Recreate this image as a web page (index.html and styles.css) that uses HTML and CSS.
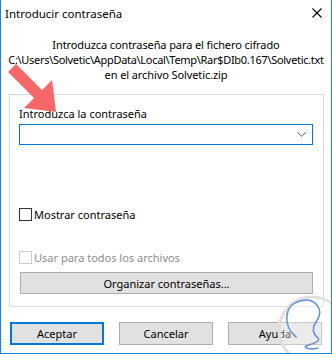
FILE: index.html
```html
<!DOCTYPE html>
<html lang="es">
<head>
<meta charset="utf-8">
<title>Introducir contraseña</title>
<link rel="stylesheet" href="styles.css">
</head>
<body>
<div class="window">
  <div class="titlebar">
    <span class="title">Introducir contraseña</span>
    <svg class="close" width="10" height="10" viewBox="0 0 10 10"><path d="M0.5 0.5 L9.5 9.5 M9.5 0.5 L0.5 9.5" stroke="#000" stroke-width="1.1" fill="none"/></svg>
  </div>
  <div class="message">
    <div>Introduzca contraseña para el fichero cifrado</div>
    <div class="path">C:\Users\Solvetic\AppData\Local\Temp\Rar$DIb0.167\Solvetic.txt</div>
    <div>en el archivo Solvetic.zip</div>
  </div>
  <div class="group">
    <div class="label">Introduzca la contraseña</div>
    <div class="combo">
      <svg class="chev" width="9" height="5" viewBox="0 0 9 5"><path d="M0.5 0.5 L4.5 4.3 L8.5 0.5" stroke="#606060" stroke-width="1" fill="none"/></svg>
    </div>
    <div class="check show"><span class="box"></span><span>Mostrar contraseña</span></div>
    <div class="check disabled"><span class="box"></span><span>Usar para todos los archivos</span></div>
    <div class="btn wide">Organizar contraseñas...</div>
  </div>
  <div class="actions">
    <div class="btn default">Aceptar</div>
    <div class="btn">Cancelar</div>
    <div class="btn">Ayuda</div>
  </div>
  <svg class="arrow" width="70" height="120" viewBox="0 0 70 120"><polygon points="16,64 42,90 52,80 56,112 24,108 34,98 8,72" fill="#f75a5c" fill-opacity="0.92"/></svg>
  <svg class="logo" width="72" height="72" viewBox="260 282 72 72">
    <circle cx="312" cy="330" r="33" fill="rgba(255,255,255,0.35)" stroke="#e0e0e0" stroke-width="3"/>
    <path d="M296 337 C283 327 283 305 300 301 C316 297 325 310 316 322 C312 328 312 333 318 338 C321 342 311 344 306 346 C303 348 311 350 318 348" fill="none" stroke="#6a94d4" stroke-width="1.6" stroke-linecap="round"/>
  </svg>
</div>
</body>
</html>
```
FILE: styles.css
```css
* { box-sizing: border-box; }
html, body { margin: 0; padding: 0; }
body {
  background: #fff;
  font-family: "Noto Sans", "Open Sans", sans-serif;
  font-size: 11px;
  color: #000;
}
.window {
  position: relative;
  width: 332px;
  height: 354px;
  border: 1px solid #1883d7;
  border-top: none;
  background: #fff;
  overflow: hidden;
}
.titlebar {
  height: 30px;
  display: flex;
  align-items: center;
  justify-content: space-between;
  padding: 0 9px 4px 4px;
}
.title { line-height: 15px; font-size: 11.5px; }
.close { display: block; }
.message {
  margin-top: 7px;
  text-align: center;
  line-height: 15px;
  white-space: nowrap;
  letter-spacing: -0.1px;
}
.message .path { letter-spacing: -0.3px; }
.group {
  margin: 12px 0 0 8px;
  width: 315px;
  border: 1px solid #dcdcdc;
  padding: 11px 10px 12px 9px;
}
.label { line-height: 15px; }
.combo {
  margin-top: 3px;
  height: 21px;
  border: 1px solid #0078d7;
  display: flex;
  align-items: center;
  justify-content: flex-end;
  padding-right: 6px;
}
.chev { display: block; }
.check {
  display: flex;
  align-items: center;
  height: 15px;
  line-height: 15px;
}
.check.show { margin-top: 62px; }
.check.disabled { margin-top: 28px; color: #8c8c8c; }
.box {
  width: 13px;
  height: 13px;
  border: 1px solid #333;
  margin-right: 2px;
  flex: none;
}
.disabled .box { border-color: #cccccc; }
.btn {
  height: 22px;
  background: #e1e1e1;
  border: 1px solid #adadad;
  display: flex;
  align-items: center;
  justify-content: center;
  line-height: 15px;
}
.btn.wide { margin: 7px 0 0 1px; }
.actions {
  display: flex;
  gap: 15px;
  margin: 15px 0 0 9px;
}
.actions .btn { width: 94px; height: 23px; }
.btn.default { border: 2px solid #0078d7; }
.arrow { position: absolute; left: -1px; top: 0; pointer-events: none; }
.logo { position: absolute; left: 259px; top: 282px; pointer-events: none; }
```
